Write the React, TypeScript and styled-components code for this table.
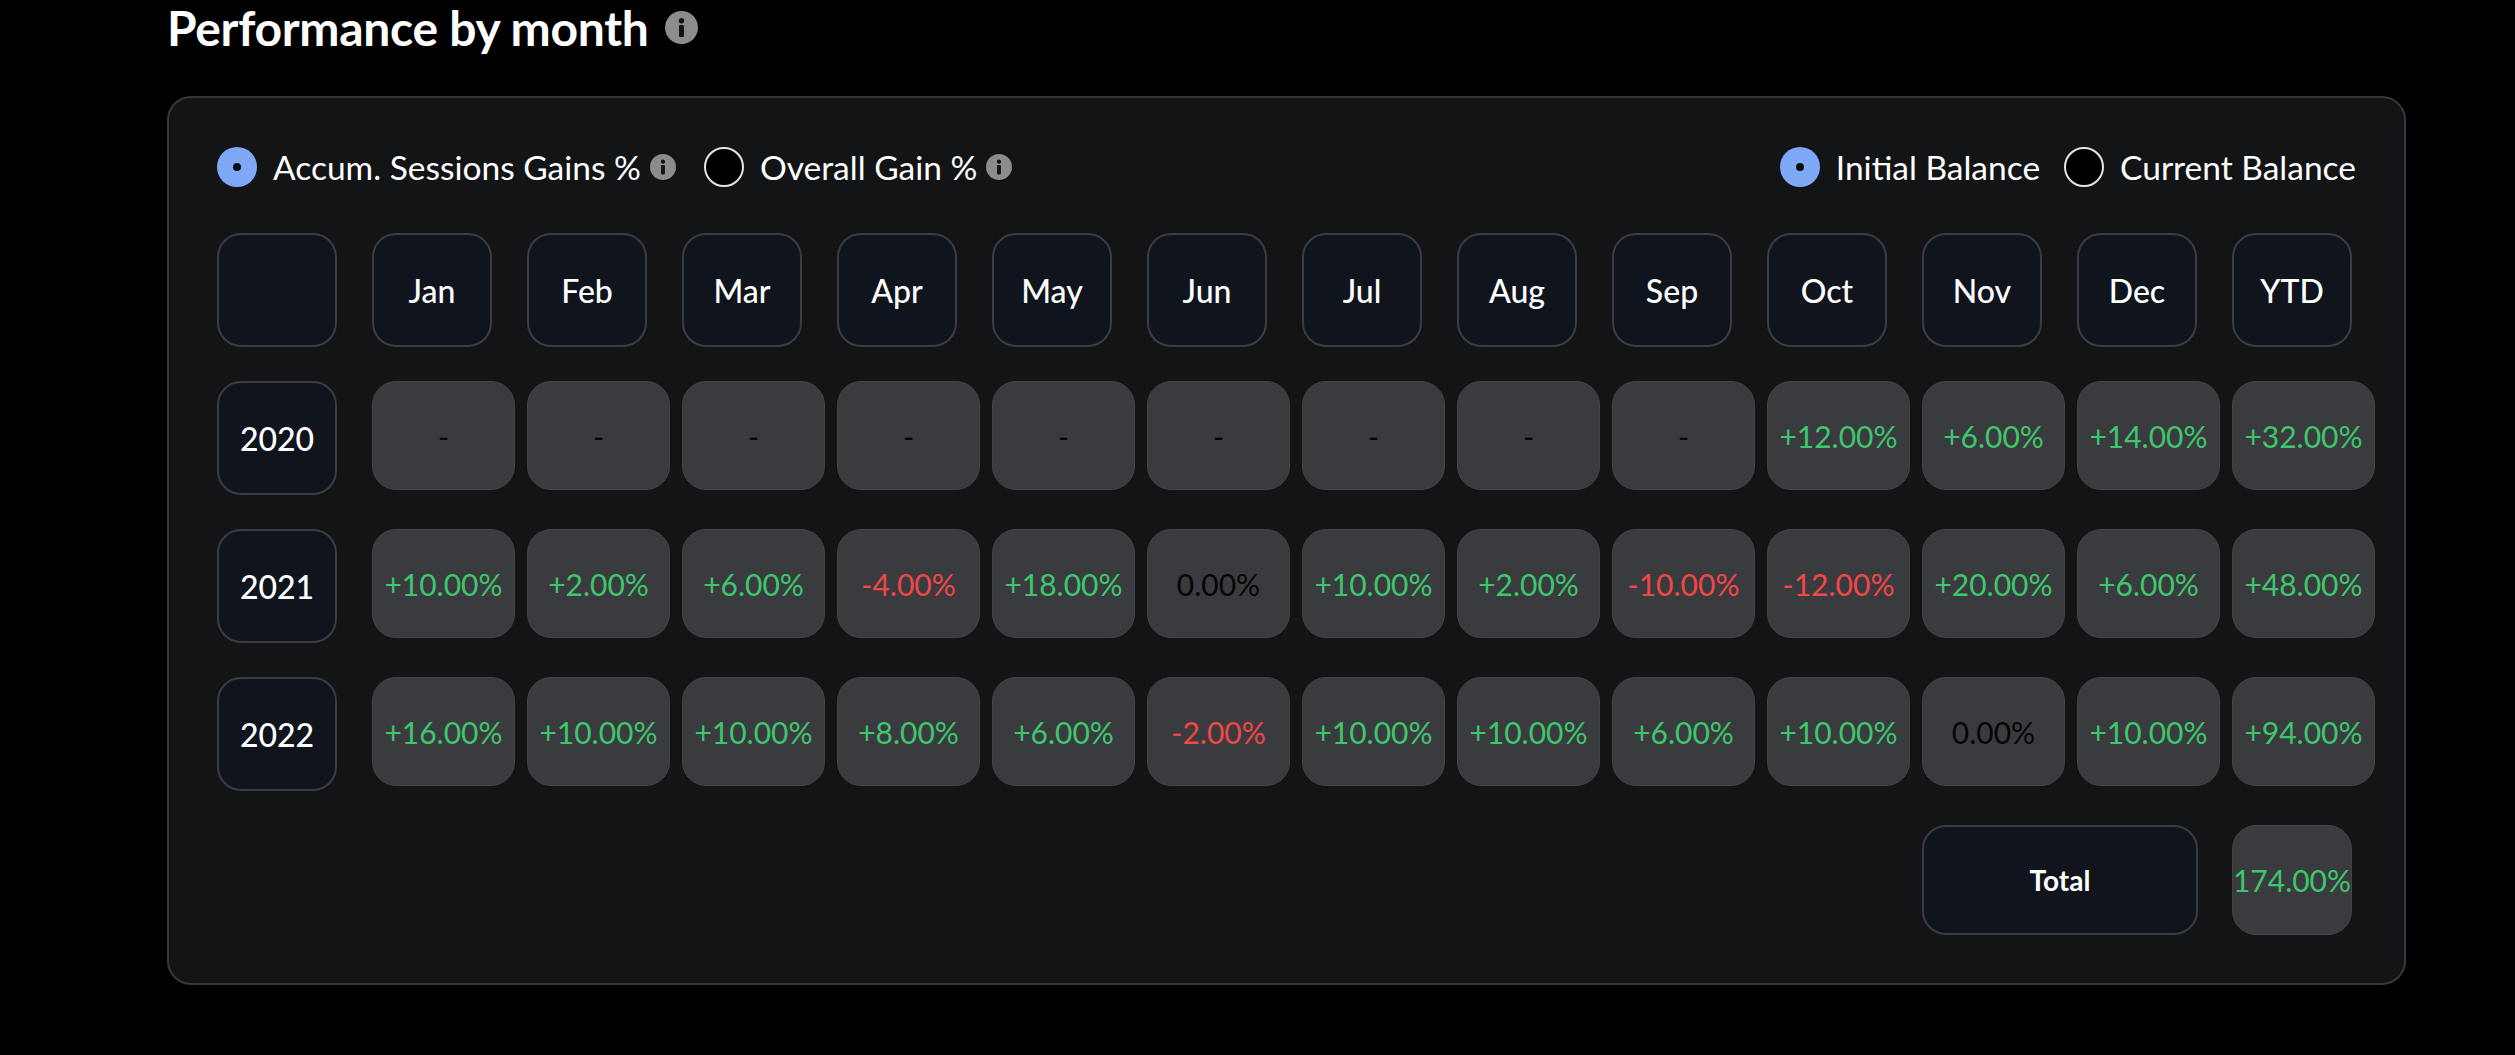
import React from "react"
import styled, { createGlobalStyle } from "styled-components"

const GlobalStyle = createGlobalStyle`
    body {
        margin: 0;
        background: #000;
        font-family: Lato, "Noto Sans", sans-serif;
        color: #fff;
    }
`

type Tone = "up" | "down" | "flat"

const MONTHS = ["Jan", "Feb", "Mar", "Apr", "May", "Jun", "Jul", "Aug", "Sep", "Oct", "Nov", "Dec", "YTD"]

const ROWS: { year: string; values: string[] }[] = [
    {
        year: "2020",
        values: ["-", "-", "-", "-", "-", "-", "-", "-", "-", "+12.00%", "+6.00%", "+14.00%", "+32.00%"],
    },
    {
        year: "2021",
        values: ["+10.00%", "+2.00%", "+6.00%", "-4.00%", "+18.00%", "0.00%", "+10.00%", "+2.00%", "-10.00%", "-12.00%", "+20.00%", "+6.00%", "+48.00%"],
    },
    {
        year: "2022",
        values: ["+16.00%", "+10.00%", "+10.00%", "+8.00%", "+6.00%", "-2.00%", "+10.00%", "+10.00%", "+6.00%", "+10.00%", "0.00%", "+10.00%", "+94.00%"],
    },
]

const toneOf = (v: string): Tone => {
    if (v.startsWith("+")) return "up"
    if (/^-\d/.test(v)) return "down"
    return "flat"
}

const InfoIcon = ({ size }: { size: number }) => (
    <svg width={size} height={size} viewBox="0 0 32 32">
        <circle cx="16" cy="16" r="16" fill="#8c8c8f" />
        <circle cx="16" cy="9.5" r="2.6" fill="#131416" />
        <rect x="13.6" y="13.6" width="4.8" height="11.5" rx="1.2" fill="#131416" />
    </svg>
)

const Radio = ({ checked, label, info }: { checked: boolean; label: string; info?: boolean }) => (
    <Option>
        <RadioDot $checked={checked} />
        <LabelWrap>
            <OptionLabel>{label}</OptionLabel>
            {info && <InfoIcon size={26} />}
        </LabelWrap>
    </Option>
)

const App: React.FC = () => {
    return (
        <Page>
            <GlobalStyle />
            <TitleRow>
                <Title>Performance by month</Title>
                <InfoIcon size={33} />
            </TitleRow>
            <Card>
                <Toolbar>
                    <RadioGroup $gap={28}>
                        <Radio checked label="Accum. Sessions Gains %" info />
                        <Radio checked={false} label="Overall Gain %" info />
                    </RadioGroup>
                    <RadioGroup $gap={24}>
                        <Radio checked label="Initial Balance" />
                        <Radio checked={false} label="Current Balance" />
                    </RadioGroup>
                </Toolbar>
                <Grid>
                    <HeadCell />
                    {MONTHS.map((m) => (
                        <HeadCell key={m}>{m}</HeadCell>
                    ))}
                    {ROWS.map((row) => (
                        <React.Fragment key={row.year}>
                            <HeadCell>{row.year}</HeadCell>
                            {row.values.map((v, i) => (
                                <ValueCell key={i} $tone={toneOf(v)}>
                                    {v}
                                </ValueCell>
                            ))}
                        </React.Fragment>
                    ))}
                    <TotalLabel>Total</TotalLabel>
                    <TotalValue $tone="up">174.00%</TotalValue>
                </Grid>
            </Card>
        </Page>
    )
}
export default App

const Page = styled.div`
    padding-left: 167px;
    width: 2239px;
    padding-bottom: 72px;
`
const TitleRow = styled.div`
    display: flex;
    align-items: center;
    gap: 16px;
    height: 55px;
    margin-bottom: 41px;
`
const Title = styled.h1`
    margin: 0;
    font-size: 48px;
    font-weight: 700;
    line-height: 1.15;
    letter-spacing: -0.3px;
    color: #fff;
`
const Card = styled.div`
    box-sizing: border-box;
    width: 2239px;
    background: #131416;
    border: 2px solid #35383c;
    border-radius: 24px;
    padding: 49px 48px 48px 48px;
`
const Toolbar = styled.div`
    display: flex;
    justify-content: space-between;
    align-items: center;
    height: 40px;
    margin-bottom: 46px;
`
const RadioGroup = styled.div<{ $gap: number }>`
    display: flex;
    align-items: center;
    gap: ${(p) => p.$gap}px;
`
const Option = styled.div`
    display: flex;
    align-items: center;
    gap: 16px;
`
const LabelWrap = styled.div`
    display: flex;
    align-items: center;
    gap: 9px;
`
const RadioDot = styled.span<{ $checked: boolean }>`
    box-sizing: border-box;
    flex: none;
    width: 40px;
    height: 40px;
    border-radius: 50%;
    display: flex;
    align-items: center;
    justify-content: center;
    background: ${(p) => (p.$checked ? "#7fa9f7" : "#000")};
    border: ${(p) => (p.$checked ? "none" : "2.5px solid #e6e6e6")};

    &::after {
        content: "";
        display: ${(p) => (p.$checked ? "block" : "none")};
        width: 8px;
        height: 8px;
        border-radius: 50%;
        background: #0b0b0c;
    }
`
const OptionLabel = styled.span`
    font-size: 33.5px;
    color: #fff;
    white-space: nowrap;
`
const Grid = styled.div`
    display: grid;
    grid-template-columns: repeat(14, 120px);
    column-gap: 35px;
    row-gap: 34px;
    align-items: start;
`
const HeadCell = styled.div`
    box-sizing: border-box;
    width: 120px;
    height: 114px;
    border-radius: 24px;
    background: #10141c;
    border: 2px solid #3a3d42;
    display: flex;
    align-items: center;
    justify-content: center;
    font-size: 32px;
    font-weight: 500;
    color: #fff;
`
const toneColor = (t: Tone) => (t === "up" ? "#3ec66c" : t === "down" ? "#f04747" : "#050505")

const ValueCell = styled.div<{ $tone: Tone }>`
    box-sizing: border-box;
    width: 143px;
    height: 109px;
    border-radius: 24px;
    background: #3a3b3f;
    border: 1.5px solid #434448;
    display: flex;
    align-items: center;
    justify-content: center;
    font-size: 30px;
    white-space: nowrap;
    color: ${(p) => toneColor(p.$tone)};
`
const TotalLabel = styled(HeadCell)`
    grid-column: 12 / span 2;
    width: 276px;
    height: 110px;
    font-size: 28px;
    font-weight: 700;
`
const TotalValue = styled(ValueCell)`
    grid-column: 14;
    width: 120px;
    height: 110px;
`
